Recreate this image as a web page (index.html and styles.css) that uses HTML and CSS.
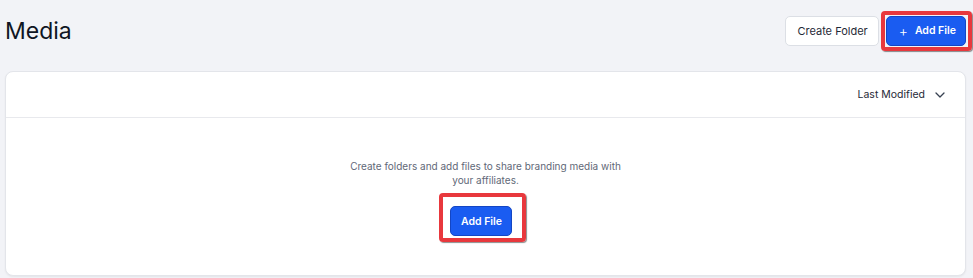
FILE: index.html
```html
<!DOCTYPE html>
<html lang="en">
<head>
  <meta charset="UTF-8">
  <meta name="viewport" content="width=device-width, initial-scale=1.0">
  <title>Media</title>
  <link rel="stylesheet" href="styles.css">
</head>
<body>
  <div class="page">
    <!-- Cabeçalho -->
    <div class="page-header">
      <h1 class="page-title">Media</h1>
      <div class="actions">
        <button class="btn btn-light">Create Folder</button>
        <div class="marked marked-top">
          <button class="btn btn-primary"><span class="plus">+</span>Add File</button>
          <span class="mark"></span>
        </div>
      </div>
    </div>

    <!-- Painel -->
    <div class="card">
      <div class="card-head">
        <button class="sort">Last Modified
          <svg width="10" height="6" viewBox="0 0 10 6"><path d="M1 1l4 4 4-4" fill="none" stroke="#374151" stroke-width="1.3" stroke-linecap="round" stroke-linejoin="round"/></svg>
        </button>
      </div>
      <div class="card-body">
        <p class="empty-text">Create folders and add files to share branding media with your affiliates.</p>
        <div class="marked marked-mid">
          <button class="btn btn-primary">Add File</button>
          <span class="mark"></span>
        </div>
      </div>
    </div>
  </div>
</body>
</html>
```

FILE: styles.css
```css
* {
  margin: 0;
  padding: 0;
  box-sizing: border-box;
}

html, body {
  height: 100%;
  background: #f2f3f7;
  font-family: 'Inter', 'Liberation Sans', sans-serif;
  color: #111827;
  overflow: hidden;
}

.page {
  padding: 0 7px 0 5px;
}

.page-header {
  height: 61px;
  display: flex;
  align-items: center;
  justify-content: space-between;
}

.page-title {
  font-size: 23px;
  font-weight: 400;
  color: #0f1523;
  margin-top: 1px;
}

.actions {
  display: flex;
  align-items: center;
  gap: 7px;
}

.btn {
  height: 30px;
  border-radius: 5px;
  font-family: inherit;
  font-size: 10.5px;
  cursor: pointer;
  display: flex;
  align-items: center;
}

.btn-light {
  background: #fff;
  border: 1px solid #dcdfe5;
  color: #1f2937;
  font-size: 11px;
  padding: 0 10px 0 11px;
}

.btn-primary {
  background: #1a5cf1;
  border: 1px solid #1446c4;
  color: #fff;
  font-weight: 600;
  padding: 0 9px 0 10px;
}

.marked-top .btn-primary {
  padding: 0 9px 0 12px;
}

.plus {
  font-weight: 300;
  font-size: 14px;
  margin-right: 7px;
}

.marked {
  position: relative;
}

.marked-mid {
  margin-right: 9px;
}

.mark {
  position: absolute;
  border: 4px solid #e8383d;
  border-radius: 4px;
  box-shadow: 1px 1px 1px rgba(0, 0, 0, 0.45);
  pointer-events: none;
}

.marked-top .mark {
  top: -5px;
  left: -5px;
  right: -6px;
  bottom: -5px;
}

.marked-mid .mark {
  top: -13px;
  left: -11px;
  right: -14px;
  bottom: -6px;
}

.card {
  margin-top: 10px;
  background: #fff;
  border: 1px solid #e3e5ea;
  border-radius: 8px;
  box-shadow: 0 1px 2px rgba(0, 0, 0, 0.06);
}

.card-head {
  height: 46px;
  border-bottom: 1px solid #e8e9ed;
  display: flex;
  align-items: center;
  justify-content: flex-end;
  padding-right: 20px;
}

.sort {
  background: none;
  border: none;
  font-family: inherit;
  font-size: 10.5px;
  color: #1f2937;
  display: flex;
  align-items: center;
  gap: 10px;
  cursor: pointer;
}

.card-body {
  padding: 41px 0 39px;
  display: flex;
  flex-direction: column;
  align-items: center;
}

.empty-text {
  max-width: 290px;
  text-align: center;
  font-size: 10px;
  line-height: 14px;
  color: #5f6877;
  margin-bottom: 19px;
}
```
